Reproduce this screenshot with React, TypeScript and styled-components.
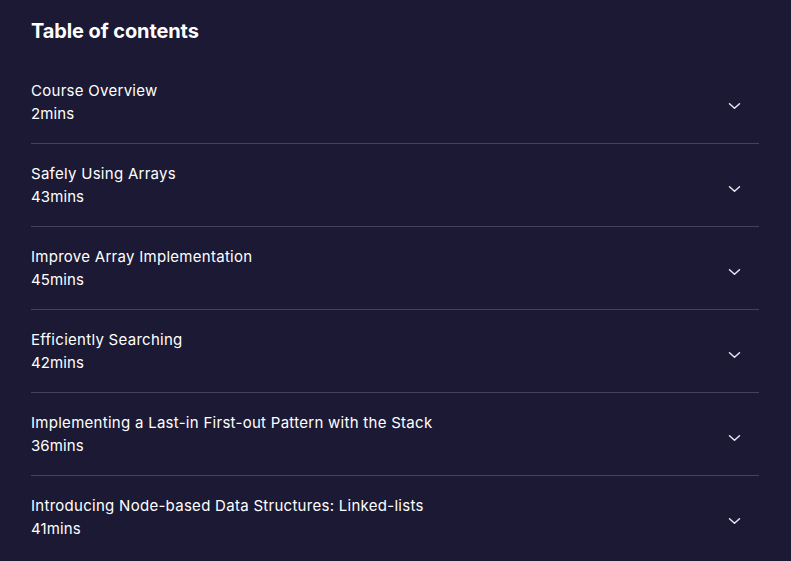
import styled, { createGlobalStyle } from "styled-components";

const GlobalStyle = createGlobalStyle`
  body {
    margin: 0;
    background: #1b1934;
    font-family: Inter, "Noto Sans", sans-serif;
    color: #ffffff;
  }
`;

const chapters = [
  { title: "Course Overview", length: "2mins" },
  { title: "Safely Using Arrays", length: "43mins" },
  { title: "Improve Array Implementation", length: "45mins" },
  { title: "Efficiently Searching", length: "42mins" },
  { title: "Implementing a Last-in First-out Pattern with the Stack", length: "36mins" },
  { title: "Introducing Node-based Data Structures: Linked-lists", length: "41mins" },
];

const Chevron = () => (
  <svg width="13" height="8" viewBox="0 0 13 8" fill="none">
    <path d="M1.5 1.75L6.5 6.25L11.5 1.75" stroke="#e8e7f0" strokeWidth="1.5" strokeLinecap="round" strokeLinejoin="round" />
  </svg>
);

export default function App() {
  return (
    <>
      <GlobalStyle />
      <Page>
        <Heading>Table of contents</Heading>
        <List>
          {chapters.map((c) => (
            <Row key={c.title}>
              <Info>
                <ChapterTitle>{c.title}</ChapterTitle>
                <Duration>{c.length}</Duration>
              </Info>
              <Toggle>
                <Chevron />
              </Toggle>
            </Row>
          ))}
        </List>
      </Page>
    </>
  );
}

const Page = styled.div`
  width: 791px;
  height: 561px;
  box-sizing: border-box;
  padding: 0 32px 0 31px;
  overflow: hidden;
`;

const Heading = styled.h2`
  margin: 0;
  height: 61px;
  display: flex;
  align-items: center;
  font-size: 20px;
  font-weight: 700;
  letter-spacing: -0.1px;
`;

const List = styled.ul`
  list-style: none;
  margin: 0;
  padding: 0;
`;

const Row = styled.li`
  display: flex;
  align-items: center;
  justify-content: space-between;
  height: 82px;
  border-bottom: 1px solid #45435c;

  &:last-child {
    border-bottom: none;
  }
`;

const Info = styled.div`
  display: flex;
  flex-direction: column;
`;

const ChapterTitle = styled.span`
  font-size: 15px;
  line-height: 23px;
  letter-spacing: 0.28px;
`;

const Duration = styled.span`
  font-size: 15px;
  line-height: 23px;
  letter-spacing: 0.1px;
`;

const Toggle = styled.div`
  display: flex;
  padding-right: 18px;
  padding-top: 8px;
`;
